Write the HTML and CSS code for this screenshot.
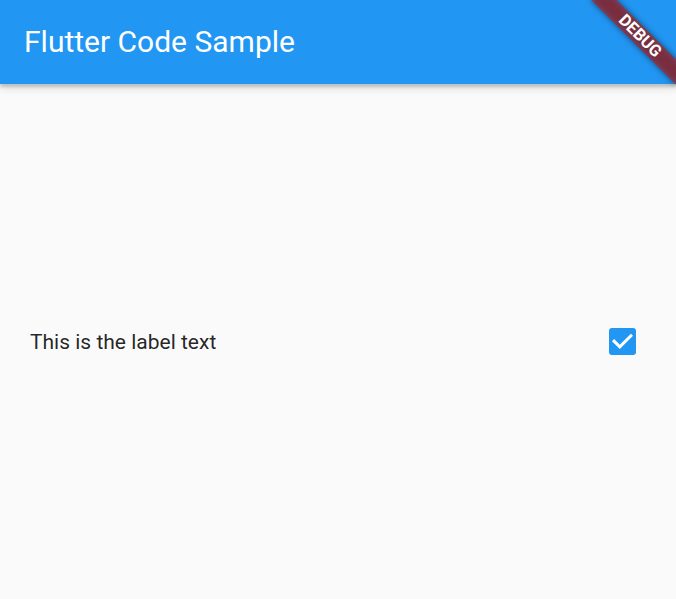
FILE: index.html
```html
<!DOCTYPE html>
<html>
<head>
<meta charset="utf-8">
<link rel="stylesheet" href="styles.css">
</head>
<body>
<div class="app">
  <header class="appbar">
    <h1 class="title">Flutter Code Sample</h1>
  </header>
  <main class="content">
    <div class="tile">
      <span class="label">This is the label text</span>
      <span class="checkbox">
        <svg width="27" height="27" viewBox="0 0 18 18">
          <rect x="0" y="0" width="18" height="18" rx="2" fill="#2196F3"/>
          <path d="M2.7 8.1 L7.2 12.6 L15.3 4.5" fill="none" stroke="#fff" stroke-width="2"/>
        </svg>
      </span>
    </div>
  </main>
  <div class="banner-shadow"></div>
  <div class="banner"><span>DEBUG</span></div>
</div>
</body>
</html>
```
FILE: styles.css
```css
html, body {
  margin: 0;
  padding: 0;
  background: #fafafa;
}
.app {
  position: relative;
  width: 676px;
  height: 599px;
  overflow: hidden;
  display: flex;
  flex-direction: column;
  font-family: Roboto, "Noto Sans", sans-serif;
}
.appbar {
  height: 84px;
  flex: none;
  background: #2196F3;
  display: flex;
  align-items: center;
  padding: 0 24px;
  box-shadow: 0 3px 3px rgba(0,0,0,0.18), 0 6px 8px rgba(0,0,0,0.08);
  position: relative;
  z-index: 1;
}
.title {
  margin: 0;
  color: #fff;
  font-size: 30px;
  font-weight: 400;
  line-height: 1;
}
.content {
  flex: 1;
  display: flex;
  align-items: center;
}
.tile {
  flex: 1;
  display: flex;
  align-items: center;
  justify-content: space-between;
  padding: 0 40px 0 30px;
}
.label {
  font-size: 21px;
  color: rgba(0,0,0,0.87);
}
.checkbox {
  display: flex;
  width: 27px;
  height: 27px;
}
.banner, .banner-shadow {
  position: absolute;
  left: 616px;
  top: 42px;
  width: 120px;
  height: 18px;
  transform-origin: 60px -42px;
  transform: rotate(45deg);
  z-index: 2;
}
.banner-shadow {
  background: rgba(0,0,0,0.5);
  filter: blur(3px);
}
.banner {
  background: rgba(183,28,28,0.627);
  display: flex;
  align-items: center;
  justify-content: center;
}
.banner span {
  color: #fff;
  font-size: 16.5px;
  font-weight: 700;
  line-height: 1;
  font-family: Roboto, sans-serif;
}
```
